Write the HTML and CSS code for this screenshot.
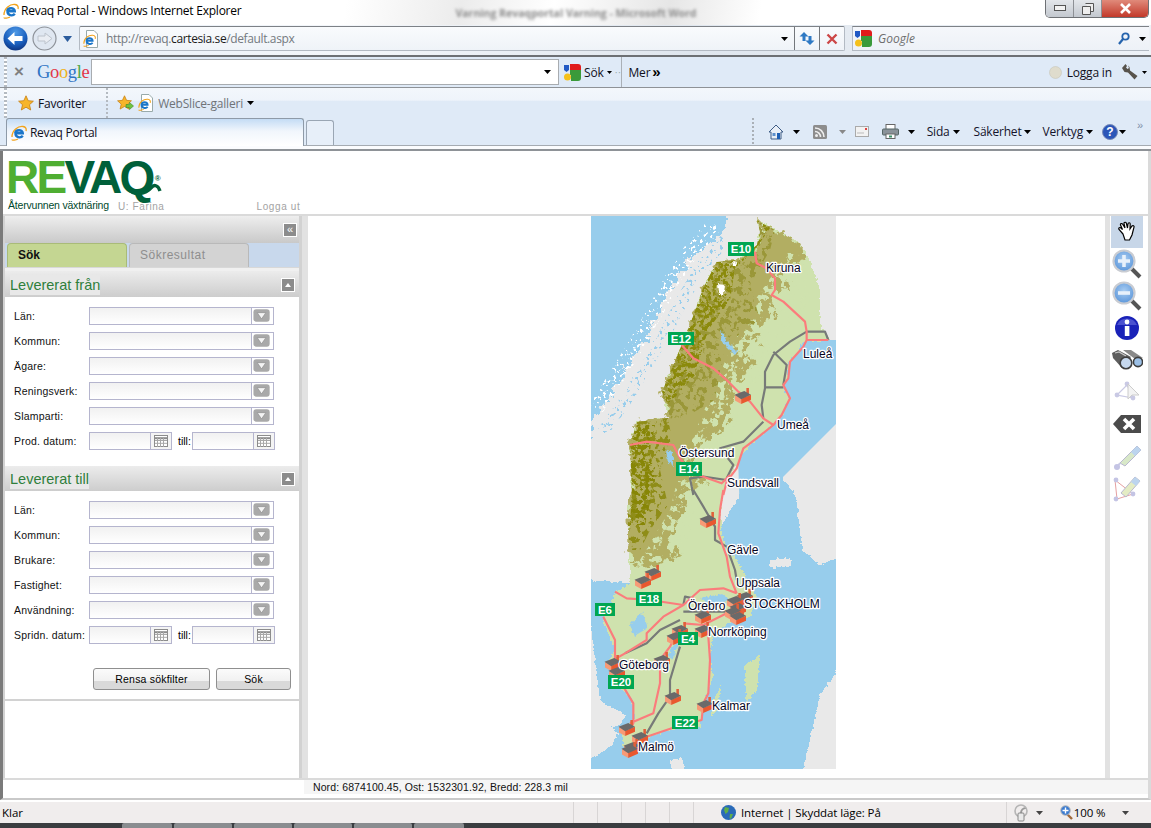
FILE: index.html
```html
<!DOCTYPE html>
<html lang="sv">
<head>
<meta charset="utf-8">
<title>Revaq Portal</title>
<link rel="stylesheet" href="styles.css">
</head>
<body>
<svg class="defs" width="0" height="0">
  <defs>
    <radialGradient id="backfill" cx=".5" cy=".25" r=".8">
      <stop offset="0" stop-color="#4f9ae6"/>
      <stop offset=".6" stop-color="#1a5fbe"/>
      <stop offset="1" stop-color="#0d2f78"/>
    </radialGradient>
    <radialGradient id="lens" cx=".5" cy=".4" r=".6">
      <stop offset="0" stop-color="#a9cdf2"/>
      <stop offset="1" stop-color="#5b96da"/>
    </radialGradient>
    <symbol id="ie" viewBox="0 0 16 16">
      <path d="M4.300 8C4.300 4.500 11.800 4 11.800 8.300H4.500C4.300 12.500 9.800 13.500 11.800 10.800" fill="none" stroke="#1b76c9" stroke-width="2.400"/>
      <path d="M1 12C1 5 7 1 12 1.500 15 1.800 15.500 4 15 6M1 14.500C1 15.800 5 15 7 14" fill="none" stroke="#f2a31b" stroke-width="1.300"/>
    </symbol>
    <symbol id="page-ie" viewBox="0 0 16 18">
      <path d="M3.500 .5H11L14.500 4V17.500H3.500Z" fill="#fff" stroke="#9aa" stroke-width="1"/>
      <use href="#ie" x="0" y="4" width="13" height="13"/>
    </symbol>
    <symbol id="gicon" viewBox="0 0 17 17">
      <path d="M6 0H14Q17 0 17 3V6H6Z" fill="#e01b1b"/>
      <path d="M6 6H17V14Q17 17 14 17H7V11H6Z" fill="#3a9a3a"/>
      <path d="M0 1H5V6L2.500 8 0 6Z" fill="#2159c4"/>
      <circle cx="3.500" cy="13" r="3.500" fill="#f5c01a"/>
    </symbol>
    <symbol id="star" viewBox="0 0 16 16">
      <path d="M8 .8 10.200 5.700 15.400 6.200 11.500 9.700 12.700 15 8 12.200 3.300 15 4.500 9.700.6 6.200 5.800 5.700Z" fill="#f7b52a" stroke="#c77f10" stroke-width=".8"/>
    </symbol>
    <symbol id="dd" viewBox="0 0 22 16">
      <rect x="1.500" y="1" width="17" height="13" rx="3" fill="#a9a9a9"/>
      <path d="M5.500 4.500H14.500L10 11Z" fill="#f4f4f4" stroke="#888" stroke-width=".6"/>
    </symbol>
    <symbol id="cal" viewBox="0 0 14 12">
      <rect x=".5" y=".5" width="13" height="11" fill="#fff" stroke="#8c8c8c"/>
      <path d="M.5 3.200H13.500" stroke="#8c8c8c" stroke-width="2"/>
      <path d="M3.500 3V12M6.500 3V12M9.500 3V12M1 5.500H13M1 8.300H13" stroke="#a8a8a8" stroke-width="1"/>
    </symbol>
    <symbol id="fac" viewBox="-8.500 -8.500 16.500 15.500" overflow="visible">
      <path d="M3 -8.500H5.500V-2H3Z" fill="#e0603a"/>
      <path d="M-8 -2 -2 2V7L-8 3.500Z" fill="#f79a76"/>
      <path d="M-2 2 7.500 -2V3L-2 7Z" fill="#e9582f"/>
      <path d="M-8.500 -2 1 -5.500 7.500 -2 -2 2.500Z" fill="#6a6a6a"/>
    </symbol>
    <filter id="rough" x="-10%" y="-10%" width="120%" height="120%" color-interpolation-filters="sRGB">
      <feTurbulence type="fractalNoise" baseFrequency=".11" numOctaves="4" seed="4"/>
      <feDisplacementMap in="SourceGraphic" scale="16" xChannelSelector="R" yChannelSelector="G"/>
    </filter>
    <filter id="rough2" x="-10%" y="-10%" width="120%" height="120%" color-interpolation-filters="sRGB">
      <feTurbulence type="fractalNoise" baseFrequency=".3" numOctaves="2" seed="9"/>
      <feDisplacementMap in="SourceGraphic" scale="5" xChannelSelector="R" yChannelSelector="G"/>
    </filter>
    <filter id="speck1" x="-5%" y="-5%" width="110%" height="110%" color-interpolation-filters="sRGB">
      <feTurbulence type="fractalNoise" baseFrequency=".16" numOctaves="3" seed="3" result="n"/>
      <feColorMatrix in="n" type="matrix" values="0 0 0 0 0 0 0 0 0 0 0 0 0 0 0 14 0 0 0 -7.300" result="m"/>
      <feComposite in="SourceGraphic" in2="m" operator="in"/>
    </filter>
    <filter id="speck2" x="-5%" y="-5%" width="110%" height="110%" color-interpolation-filters="sRGB">
      <feTurbulence type="fractalNoise" baseFrequency=".22" numOctaves="3" seed="11" result="n"/>
      <feColorMatrix in="n" type="matrix" values="0 0 0 0 0 0 0 0 0 0 0 0 0 0 0 14 0 0 0 -6.800" result="m"/>
      <feComposite in="SourceGraphic" in2="m" operator="in"/>
    </filter>
    <filter id="speck3" x="-5%" y="-5%" width="110%" height="110%" color-interpolation-filters="sRGB">
      <feTurbulence type="fractalNoise" baseFrequency=".3" numOctaves="2" seed="21" result="n"/>
      <feColorMatrix in="n" type="matrix" values="0 0 0 0 0 0 0 0 0 0 0 0 0 0 0 16 0 0 0 -9.600" result="m"/>
      <feComposite in="SourceGraphic" in2="m" operator="in"/>
    </filter>
  </defs>
</svg>

<div class="browser-top">
  <div class="titlebar">
    <svg class="ic16 ml3" viewBox="0 0 16 16"><use href="#ie"/></svg>
    <span class="title-text">Revaq Portal - Windows Internet Explorer</span>
    <span class="ghost-title">Varning Revaqportal Varning - Microsoft Word</span>
    <div class="winbtns">
      <span class="winbtn">
        <svg width="12" height="7" viewBox="0 0 12 7"><rect x=".5" y=".5" width="11" height="5" fill="#f2f2f2" stroke="#555"/></svg>
      </span>
      <span class="winbtn">
        <svg width="12" height="12" viewBox="0 0 12 12"><path d="M3.500 .5H11.500V8.500H9M.5 3.500H8.500V11.500H.5Z" fill="#eee" stroke="#555"/></svg>
      </span>
      <span class="winbtn close">
        <svg width="13" height="11" viewBox="0 0 13 11"><path d="M2 1 11 10M11 1 2 10" stroke="#fff" stroke-width="2.600"/></svg>
      </span>
    </div>
  </div>

  <div class="addressrow">
    <svg class="backbtn" width="25" height="25" viewBox="0 0 25 25">
      <circle cx="12.500" cy="12.500" r="12" fill="url(#backfill)"/>
      <path d="M4.500 12.500 11.500 6V10H19.500V15H11.500V19Z" fill="#fff"/>
    </svg>
    <svg class="fwdbtn" width="25" height="25" viewBox="0 0 25 25">
      <circle cx="12.500" cy="12.500" r="11.500" fill="#dfe7f1" stroke="#8d9299" stroke-width="1.200"/>
      <path d="M20 12.500 13 7V10H6V15H13V18Z" fill="#e9edf3" stroke="#bcc3cc"/>
    </svg>
    <svg class="recent" width="9" height="6" viewBox="0 0 9 6"><path d="M0 0H9L4.500 6Z" fill="#2b5c9d"/></svg>
    <div class="urlbox">
      <svg class="ic-page" viewBox="0 0 16 18"><use href="#page-ie"/></svg>
      <span class="url">http://revaq.<b>cartesia.se</b>/default.aspx</span>
      <svg class="tri ml-auto" width="7" height="4" viewBox="0 0 7 4"><path d="M0 0H7L3.500 4Z"/></svg>
      <span class="urlbtn first">
        <svg width="16" height="15" viewBox="0 0 16 15"><path d="M5 1 .5 5.500H3.500V10H6.500V5.500H9.500ZM11 14 15.500 9.500H12.500V5H9.500V9.500H6.500Z" fill="#2e79c4"/></svg>
      </span>
      <span class="urlbtn">
        <svg width="12" height="12" viewBox="0 0 12 12"><path d="M1.500 1.500 10.500 10.500M10.500 1.500 1.500 10.500" stroke="#cc4747" stroke-width="2.400"/></svg>
      </span>
    </div>
    <div class="searchbox">
      <svg class="ic17" viewBox="0 0 17 17"><use href="#gicon"/></svg>
      <span class="search-text">Google</span>
      <svg class="ml-auto" width="12" height="13" viewBox="0 0 12 13"><circle cx="7.500" cy="4.500" r="3.200" fill="none" stroke="#2563ad" stroke-width="1.800"/><path d="M5 7 1 12" stroke="#2563ad" stroke-width="2.200"/></svg>
      <svg class="tri search-tri" width="7" height="4" viewBox="0 0 7 4"><path d="M0 0H7L3.500 4Z"/></svg>
    </div>
  </div>

  <div class="googlerow">
    <span class="grip"></span>
    <span class="gclose">×</span>
    <span class="glogo"><i class="c-b">G</i><i class="c-r">o</i><i class="c-y">o</i><i class="c-b">g</i><i class="c-g">l</i><i class="c-r">e</i></span>
    <div class="ginput"><svg class="tri ml-auto" width="7" height="4" viewBox="0 0 7 4"><path d="M0 0H7L3.500 4Z"/></svg></div>
    <svg class="ic17 gi" viewBox="0 0 17 17"><use href="#gicon"/></svg>
    <span class="ctext sok">Sök</span>
    <svg class="tri-s" width="5" height="3" viewBox="0 0 5 3"><path d="M0 0H5L2.500 3Z"/></svg>
    <span class="dots">··</span>
    <span class="vline"></span>
    <span class="ctext">Mer</span>
    <span class="more">»</span>
    <svg class="ball" width="13" height="13" viewBox="0 0 13 13"><circle cx="6.500" cy="6.500" r="6" fill="#dfdccd" stroke="#c8c6b8" stroke-width=".6"/></svg>
    <span class="ctext login">Logga in</span>
    <svg class="wrench" width="16" height="16" viewBox="0 0 16 16"><path d="M0 4 3.500 0 5 2 4 3.500 5.500 5 7 4 6 1.500 7.500 3 8 6.500 15.500 12 12.500 15.500 6 8.500 2.500 8Z" fill="#57534c"/></svg>
    <svg class="tri-s end" width="5" height="3" viewBox="0 0 5 3"><path d="M0 0H5L2.500 3Z"/></svg>
  </div>

  <div class="favrow">
    <span class="grip"></span>
    <svg class="ic16 favstar" viewBox="0 0 16 16"><use href="#star"/></svg>
    <span class="ctext">Favoriter</span>
    <span class="grip2"></span>
    <svg class="addfav" width="17" height="17" viewBox="0 0 17 17"><use href="#star" width="15" height="15"/><path d="M9 9.500H12.500V7.500L16.500 11 12.500 14.500V12.500H9Z" fill="#6fc23f" stroke="#3f8a22" stroke-width=".6"/></svg>
    <svg class="ic-page2" viewBox="0 0 16 18"><use href="#page-ie"/></svg>
    <span class="ctext grey">WebSlice-galleri</span>
    <svg class="tri fav-tri" width="7" height="4" viewBox="0 0 7 4"><path d="M0 0H7L3.500 4Z"/></svg>
  </div>

  <div class="tabrow">
    <div class="tab">
      <svg class="ic16" viewBox="0 0 16 16"><use href="#ie"/></svg>
      <span class="ctext tabtext">Revaq Portal</span>
    </div>
    <div class="newtab"></div>
    <div class="cmds">
      <span class="grip3"></span>
      <svg class="cmd-home" width="16" height="16" viewBox="0 0 16 16"><path d="M8 1 15 8H13V15H3V8H1Z" fill="#e8eef6" stroke="#3e5d86"/><rect x="9" y="9" width="3" height="6" fill="#1f5fb3"/><rect x="4.500" y="9" width="3" height="3" fill="#5d8fcb"/></svg>
      <svg class="tri cmd-t1" width="7" height="4" viewBox="0 0 7 4"><path d="M0 0H7L3.500 4Z"/></svg>
      <svg class="cmd-rss" width="14" height="14" viewBox="0 0 14 14"><rect width="14" height="14" rx="1.500" fill="#8d8d8d"/><circle cx="3.500" cy="10.500" r="1.500" fill="#eee"/><path d="M2 6.500A5.500 5.500 0 0 1 7.500 12M2 3A9 9 0 0 1 11 12" fill="none" stroke="#eee" stroke-width="1.600"/></svg>
      <svg class="tri cmd-t2" width="7" height="4" viewBox="0 0 7 4"><path d="M0 0H7L3.500 4Z" fill="#888"/></svg>
      <svg class="cmd-mail" width="14" height="12" viewBox="0 0 14 12"><rect x=".5" y=".5" width="13" height="10" fill="#f2f2f2" stroke="#aaa"/><path d="M2 7H9" stroke="#bbb"/><rect x="10" y="2" width="2" height="2" fill="#d44"/></svg>
      <svg class="cmd-print" width="17" height="15" viewBox="0 0 17 15"><rect x="4" y=".5" width="9" height="6" fill="#fff" stroke="#666"/><rect x=".5" y="5" width="16" height="6" rx="1" fill="#8a9299" stroke="#566"/><rect x="4" y="10" width="9" height="4.500" fill="#fff" stroke="#666"/><rect x="7" y="11.500" width="3" height="2" fill="#3c8f6a"/></svg>
      <svg class="tri cmd-t3" width="7" height="4" viewBox="0 0 7 4"><path d="M0 0H7L3.500 4Z"/></svg>
      <span class="ctext cmd-label">Sida</span>
      <svg class="tri" width="7" height="4" viewBox="0 0 7 4"><path d="M0 0H7L3.500 4Z"/></svg>
      <span class="ctext cmd-label sak">Säkerhet</span>
      <svg class="tri" width="7" height="4" viewBox="0 0 7 4"><path d="M0 0H7L3.500 4Z"/></svg>
      <span class="ctext cmd-label ver">Verktyg</span>
      <svg class="tri" width="7" height="4" viewBox="0 0 7 4"><path d="M0 0H7L3.500 4Z"/></svg>
      <span class="help">?</span>
      <svg class="tri" width="7" height="4" viewBox="0 0 7 4"><path d="M0 0H7L3.500 4Z"/></svg>
      <span class="cmd-more">»</span>
    </div>
  </div>
</div>

<main class="page">
  <header class="apphead">
    <div class="logo">
      <div class="logo-word"><span class="re">RE</span><span class="vaq">VAQ</span><span class="reg">®</span>
        <svg class="qtail" width="44" height="16" viewBox="0 0 44 16"><path d="M6 6C12 15 24 12 29 6 32 2 36 3 38 9" fill="none" stroke="#00603a" stroke-width="3.400"/></svg>
      </div>
      <div class="logo-sub">Återvunnen växtnäring</div>
    </div>
    <span class="user">U: Farina</span>
    <span class="logout">Logga ut</span>
  </header>

  <div class="content">
    <aside class="panel">
      <div class="panelhead"><span class="sqbtn">«</span></div>
      <div class="tabs">
        <span class="ptab active">Sök</span>
        <span class="ptab">Sökresultat</span>
      </div>
      <div class="sechead first"><span class="sectitle">Levererat från</span><span class="sqbtn up"><i></i></span></div>
      <div class="secbody">
        <div class="frow"><label class="flabel">Län:</label><span class="combo"><span class="cfield"></span><svg class="cbtn" viewBox="0 0 22 16"><use href="#dd"/></svg></span></div>
        <div class="frow"><label class="flabel">Kommun:</label><span class="combo"><span class="cfield"></span><svg class="cbtn" viewBox="0 0 22 16"><use href="#dd"/></svg></span></div>
        <div class="frow"><label class="flabel">Ägare:</label><span class="combo"><span class="cfield"></span><svg class="cbtn" viewBox="0 0 22 16"><use href="#dd"/></svg></span></div>
        <div class="frow"><label class="flabel">Reningsverk:</label><span class="combo"><span class="cfield"></span><svg class="cbtn" viewBox="0 0 22 16"><use href="#dd"/></svg></span></div>
        <div class="frow"><label class="flabel">Slamparti:</label><span class="combo"><span class="cfield"></span><svg class="cbtn" viewBox="0 0 22 16"><use href="#dd"/></svg></span></div>
        <div class="frow"><label class="flabel">Prod. datum:</label><span class="date"><span class="cfield"></span><span class="calbtn"><svg width="14" height="12" viewBox="0 0 14 12"><use href="#cal"/></svg></span></span><span class="till">till:</span><span class="date"><span class="cfield"></span><span class="calbtn"><svg width="14" height="12" viewBox="0 0 14 12"><use href="#cal"/></svg></span></span></div>
      </div>
      <div class="sechead"><span class="sectitle">Levererat till</span><span class="sqbtn up"><i></i></span></div>
      <div class="secbody">
        <div class="frow"><label class="flabel">Län:</label><span class="combo"><span class="cfield"></span><svg class="cbtn" viewBox="0 0 22 16"><use href="#dd"/></svg></span></div>
        <div class="frow"><label class="flabel">Kommun:</label><span class="combo"><span class="cfield"></span><svg class="cbtn" viewBox="0 0 22 16"><use href="#dd"/></svg></span></div>
        <div class="frow"><label class="flabel">Brukare:</label><span class="combo"><span class="cfield"></span><svg class="cbtn" viewBox="0 0 22 16"><use href="#dd"/></svg></span></div>
        <div class="frow"><label class="flabel">Fastighet:</label><span class="combo"><span class="cfield"></span><svg class="cbtn" viewBox="0 0 22 16"><use href="#dd"/></svg></span></div>
        <div class="frow"><label class="flabel">Användning:</label><span class="combo"><span class="cfield"></span><svg class="cbtn" viewBox="0 0 22 16"><use href="#dd"/></svg></span></div>
        <div class="frow"><label class="flabel">Spridn. datum:</label><span class="date"><span class="cfield"></span><span class="calbtn"><svg width="14" height="12" viewBox="0 0 14 12"><use href="#cal"/></svg></span></span><span class="till">till:</span><span class="date"><span class="cfield"></span><span class="calbtn"><svg width="14" height="12" viewBox="0 0 14 12"><use href="#cal"/></svg></span></span></div>
      </div>
      <div class="actions">
        <span class="btn wide">Rensa sökfilter</span>
        <span class="btn narrow">Sök</span>
      </div>
      <div class="panelrest"></div>
    </aside>

    <section class="mapwrap">
      <svg class="map" width="245" height="553" viewBox="591 216 245 553">
        <rect x="591" y="216" width="245" height="553" fill="#e9e9e9"/>
        <g filter="url(#rough)" shape-rendering="crispEdges">
          <path fill="#97cdec" d="M585 205H730L723 232 703 248 690 258 673 285 662 308 647 335 633 358 613 392 593 422 585 445Z"/>
        </g>
        <path class="band-white" filter="url(#speck3)" d="M715 225 692 250 672 280 655 312 636 345 616 378 596 408"/>
        <path class="band-blue" filter="url(#speck3)" d="M725 240 703 265 684 297 668 328 648 362 628 397 603 432"/>
        <g filter="url(#rough2)" shape-rendering="crispEdges">
          <path fill="#97cdec" d="M585 580 630 583 700 560 836 340H845L842 408 820 425 802 442 796 458 782 478 796 495 798 513 802 550 820 565 845 555V660L820 695 810 740 802 775H585V735L620 725 625 715 600 700Z"/>
        </g>
        <path fill="#97cdec" d="M800 340H840V420L800 460 740 520 735 360Z"/>
        <g filter="url(#rough2)" shape-rendering="crispEdges">
          <path fill="#e9e9e9" d="M585 735 610 726 618 733 612 745 598 755 585 760Z"/>
          <path fill="#e9e9e9" d="M770 560 790 558 792 566 770 568Z"/>
          <path fill="#e9e9e9" d="M670 760 682 758 686 772 672 772Z"/>
          <path fill="#cfe2ae" d="M757 220 768 225 800 243 810 262 820 288 820 325 830 340 803 342 798 352 788 362 788 378 783 388 790 398 782 415 773 425 750 445 740 458 723 490 720 513 723 540 737 560 747 580 757 597 750 617 730 623 713 633 710 657 713 677 703 707 700 727 670 730 648 737 633 753 623 747 622 730 635 717 632 700 613 680 607 663 615 650 603 620 615 593 630 583 628 503 632 495 630 445 637 422 668 418 662 392 690 325 703 288 717 262 737 260 757 245 760 232Z"/>
          <path fill="#cfe2ae" d="M745 665 760 656 757 690 746 703Z"/>
          <path fill="#cfe2ae" d="M714 700 722 684 718 705 712 716Z"/>
        </g>
        <g filter="url(#rough)">
          <path fill="#b2ae62" d="M757 220 800 243 806 258 787 272 790 292 767 288 777 315 767 325 750 322 763 348 740 332 757 365 733 388 730 422 707 442 690 462 707 482 690 490 670 540 683 557 653 567 630 563 628 503 632 495 630 445 637 422 668 418 662 392 690 325 703 288 717 262 737 260 757 245 760 232Z"/>
        </g>
        <path filter="url(#speck1)" fill="#cfe2ae" d="M790 250 810 262 810 300 775 345 770 365 740 400 735 430 700 470 700 500 680 560 650 580 640 560 670 510 680 470 700 420 730 350 755 300Z"/>
        <path filter="url(#speck1)" fill="#9a9738" d="M757 220 775 230 770 250 750 285 760 320 725 345 715 400 680 420 668 418 662 392 690 325 703 288 717 262 737 260 757 245 760 232Z"/>
        <path filter="url(#speck2)" fill="#8b8a0c" d="M757 220 770 228 755 250 735 268 730 300 708 330 695 375 668 405 662 392 690 325 703 288 717 262 737 260 757 245 760 232Z"/>
        <path filter="url(#speck1)" fill="#8f8d18" d="M637 422 668 418 672 440 660 470 668 505 650 530 640 550 628 550 628 503 632 495 630 445Z"/>
        <path filter="url(#speck2)" fill="#878606" d="M637 425 655 425 650 450 655 480 645 525 630 525 632 495 630 445Z"/>
        <g filter="url(#rough2)">
          <path fill="#fff" d="M718 284 725 285 724 295 719 294Z"/>
          <path fill="#fff" d="M732 261 737 262 736 266 733 266Z"/>
          <path fill="#97cdec" d="M720 328 726 340 738 352 734 354 722 342Z"/>
          <path fill="#97cdec" d="M666 450 672 452 674 466 668 462Z"/>
          <path fill="#97cdec" d="M630 625 642 612 648 628 634 636Z"/>
          <path fill="#97cdec" d="M668 655 678 638 680 640 672 660Z"/>
          <path fill="#97cdec" d="M700 598 722 594 730 600 715 610Z"/>
        </g>
        <g class="roads-grey" transform="translate(590 215) scale(.33333)">
          <path d="M650 350 705 350 715 375M650 350 600 380 550 420 525 470 525 520 515 570 520 610M550 410 590 450 580 510M525 517 580 517M520 620 460 680 390 700 430 750 410 790M410 795 340 785 300 790 310 840"/>
        </g>
        <g class="roads" transform="translate(590 215) scale(.33333)">
          <path d="M495 110 500 145 530 160 555 190 555 225 545 240 580 260 645 320 650 350 650 375 715 375M650 375 640 395 600 440 595 490 580 510 600 550 575 600 550 630 500 670 460 700 440 760 410 800 400 840M275 390 310 430 370 460 410 495 445 530 480 560 520 610 550 630M120 690 170 680 250 690 270 730 300 770 340 785 395 805 420 780"/>
        </g>
        <g class="roads-grey" transform="translate(590 490) scale(.33333)">
          <path d="M310 0 340 50 375 110 375 150 410 170 435 240 440 270M280 345 285 320 310 325M280 365 430 365M105 490 170 460 210 420 270 390M270 470 240 570 240 620 205 670 170 730"/>
        </g>
        <g class="roads" transform="translate(590 490) scale(.33333)">
          <path d="M400 0 390 60 385 130 410 200 420 260 440 310M75 305 110 325 180 330 280 345 330 300 400 295 440 310M280 345 220 380 170 430 170 450 105 490 70 510M40 380 75 450 75 510 100 590 130 640 130 700 120 720M120 700 190 670 210 580 210 510 240 470 260 430M280 400 340 405 410 370M355 440 360 510 355 610 340 640 335 690 245 715 170 740 130 740"/>
        </g>
        <g class="facs">
          <use href="#fac" x="734" y="388" width="18" height="16"/>
          <use href="#fac" x="699" y="512" width="18" height="16"/>
          <use href="#fac" x="644" y="565" width="18" height="16"/>
          <use href="#fac" x="634" y="573" width="18" height="16"/>
          <use href="#fac" x="736" y="589" width="18" height="16"/>
          <use href="#fac" x="726" y="593" width="18" height="16"/>
          <use href="#fac" x="729" y="600" width="18" height="16"/>
          <use href="#fac" x="724" y="604" width="18" height="16"/>
          <use href="#fac" x="729" y="609" width="18" height="16"/>
          <use href="#fac" x="694" y="608" width="18" height="16"/>
          <use href="#fac" x="694" y="622" width="18" height="16"/>
          <use href="#fac" x="671" y="622" width="18" height="16"/>
          <use href="#fac" x="666" y="629" width="18" height="16"/>
          <use href="#fac" x="604" y="655" width="18" height="16"/>
          <use href="#fac" x="608" y="664" width="18" height="16"/>
          <use href="#fac" x="653" y="652" width="18" height="16"/>
          <use href="#fac" x="664" y="689" width="18" height="16"/>
          <use href="#fac" x="696" y="697" width="18" height="16"/>
          <use href="#fac" x="618" y="720" width="18" height="16"/>
          <use href="#fac" x="631" y="729" width="18" height="16"/>
          <use href="#fac" x="623" y="739" width="18" height="16"/>
          <use href="#fac" x="621" y="742" width="18" height="16"/>
        </g>
        <g class="shields">
          <rect x="728" y="242" width="26" height="14"/><text x="741" y="253">E10</text>
          <rect x="668" y="332" width="26" height="13"/><text x="681" y="343">E12</text>
          <rect x="676" y="462" width="26" height="14"/><text x="689" y="473">E14</text>
          <rect x="636" y="592" width="26" height="14"/><text x="649" y="603">E18</text>
          <rect x="595" y="603" width="20" height="13"/><text x="605" y="614">E6</text>
          <rect x="678" y="632" width="20" height="13"/><text x="688" y="643">E4</text>
          <rect x="608" y="675" width="26" height="14"/><text x="621" y="686">E20</text>
          <rect x="672" y="716" width="26" height="13"/><text x="685" y="727">E22</text>
        </g>
        <g class="cities">
          <text x="766" y="272">Kiruna</text>
          <text x="803" y="358">Luleå</text>
          <text x="777" y="429">Umeå</text>
          <text x="679" y="457">Östersund</text>
          <text x="727" y="487">Sundsvall</text>
          <text x="727" y="554">Gävle</text>
          <text x="736" y="587">Uppsala</text>
          <text x="744" y="608">STOCKHOLM</text>
          <text x="688" y="610">Örebro</text>
          <text x="708" y="636">Norrköping</text>
          <text x="619" y="669">Göteborg</text>
          <text x="712" y="710">Kalmar</text>
          <text x="638" y="751">Malmö</text>
        </g>
      </svg>
    </section>

    <nav class="tools">
      <span class="tool sel">
        <svg width="20" height="22" viewBox="0 0 20 22"><path d="M6 13 2 8.500C1 7 3 6 4 7L5.500 8.500 3.500 4C3 2.500 5 2 5.700 3.300L8 7 7 2.500C6.800 1 9 .8 9.400 2.300L10.500 7 11 2.800C11.300 1.300 13.200 1.500 13.200 3L13 8 15 5C16 4 17.500 5 17 6.200L15 14 12.500 19H8Z" fill="#fff" stroke="#000" stroke-width="1.200"/></svg>
      </span>
      <span class="tool">
        <svg width="30" height="30" viewBox="0 0 30 30"><path d="M19 19 28 28" stroke="#555" stroke-width="4"/><circle cx="12" cy="12" r="10.500" fill="url(#lens)" stroke="#c9ccd2" stroke-width="2.200"/><path d="M12 6V18M6 12H18" stroke="#e8f1fb" stroke-width="3.600"/></svg>
      </span>
      <span class="tool">
        <svg width="30" height="30" viewBox="0 0 30 30"><path d="M19 19 28 28" stroke="#555" stroke-width="4"/><circle cx="12" cy="12" r="10.500" fill="url(#lens)" stroke="#c9ccd2" stroke-width="2.200"/><path d="M6 12H18" stroke="#e8f1fb" stroke-width="3.600"/></svg>
      </span>
      <span class="tool">
        <svg width="26" height="26" viewBox="0 0 26 26"><circle cx="13" cy="13" r="12" fill="#1a22b8"/><path d="M3 10A11 11 0 0 1 23 10Z" fill="#6a72e0" opacity=".6"/><circle cx="13" cy="7" r="2.400" fill="#fff"/><rect x="10.800" y="11" width="4.600" height="10" fill="#fff"/></svg>
      </span>
      <span class="tool">
        <svg width="32" height="22" viewBox="0 0 32 22"><path d="M12 1H20L32 9 24 10Z" fill="#8a8a8a"/><path d="M1 4 7 1 20 8 11 19 2 9Z" fill="#5e5e5e"/><path d="M4 4 8 3 15 7" fill="none" stroke="#c8c8c8" stroke-width="1.200"/><circle cx="15" cy="14" r="5.800" fill="#c6d8ee" stroke="#3e3e3e" stroke-width="1.600"/><circle cx="27" cy="13" r="4.600" fill="#9cc0e6" stroke="#3e3e3e" stroke-width="1.600"/></svg>
      </span>
      <span class="tool">
        <svg width="28" height="28" viewBox="0 0 28 28"><path d="M4 17 14 7 20 20Z" fill="none" stroke="#c9c9e4" stroke-width="1.200"/><circle cx="14" cy="6" r="2.400" fill="#c9c9e4"/><circle cx="4" cy="17" r="2.400" fill="#c9c9e4"/><circle cx="20" cy="20" r="2.400" fill="#c9c9e4"/><path d="M15 6V21L19 17 26 17Z" fill="#f3f3f3" stroke="#ccc"/></svg>
      </span>
      <span class="tool">
        <svg width="30" height="20" viewBox="0 0 30 20"><path d="M9 1H29V19H9L1 10Z" fill="#4b4b4b"/><path d="M12 5 22 15M22 5 12 15" stroke="#fff" stroke-width="3.600"/></svg>
      </span>
      <span class="tool">
        <svg width="28" height="30" viewBox="0 0 28 30"><path d="M7 22 24 5 28 9 12 25Z" fill="#d8e8c8" stroke="#b9b9cf"/><path d="M18 11 24 5 28 9 22 15Z" fill="#bcd4ee"/><path d="M7 22 5 25" stroke="#c9c9e4" stroke-width="2"/><circle cx="4" cy="26" r="3" fill="#c4c4e4"/></svg>
      </span>
      <span class="tool">
        <svg width="28" height="30" viewBox="0 0 28 30"><path d="M4 26 2 7 20 21Z" fill="none" stroke="#e6a0a0" stroke-width="1"/><circle cx="3" cy="7" r="2.400" fill="#c4c4e4"/><circle cx="3" cy="26" r="2.400" fill="#c4c4e4"/><circle cx="20" cy="21" r="2.400" fill="#c4c4e4"/><path d="M8 20 22 4 27 8 13 24Z" fill="#e4ecc4" stroke="#b9b9cf"/><path d="M18 9 22 4 27 8 23 13Z" fill="#bcd4ee"/></svg>
      </span>
    </nav>
  </div>

  <div class="coords"><span class="coordtext">Nord: 6874100.45, Ost: 1532301.92, Bredd: 228.3 mil</span></div>
</main>

<footer class="status">
  <span class="klar">Klar</span>
  <span class="cell"></span><span class="cell"></span><span class="cell"></span><span class="cell"></span><span class="cell"></span><span class="cell"></span>
  <svg class="globe" width="15" height="15" viewBox="0 0 15 15"><circle cx="7.500" cy="7.500" r="7.500" fill="#2a6ab8"/><path d="M4 2 8 3 7 7 4.500 9 3 5ZM9 9 12 9 10 14 8.500 13Z" fill="#5fae4a"/></svg>
  <span class="stext zone">Internet | Skyddat läge: På</span>
  <span class="statgap"></span>
  <svg class="lock" width="16" height="18" viewBox="0 0 16 18"><path d="M8 17V9A5 5 0 0 1 13 4" fill="none" stroke="#9a9a9a" stroke-width="2"/><circle cx="8" cy="7" r="6" fill="none" stroke="#b5b5b5" stroke-width="1.600"/><rect x="5" y="9" width="6" height="8" rx="1" fill="#e9e9e9" stroke="#888"/></svg>
  <svg class="tri st-t" width="7" height="4" viewBox="0 0 7 4"><path d="M0 0H7L3.500 4Z" fill="#444"/></svg>
  <svg class="zoomi" width="13" height="15" viewBox="0 0 13 15"><path d="M7 9 12 14" stroke="#a06a3a" stroke-width="2.400"/><circle cx="5.500" cy="5.500" r="4.800" fill="#3b7bd0" stroke="#bbb"/><path d="M5.500 2.500V8.500M2.500 5.500H8.500" stroke="#fff" stroke-width="1.400"/></svg>
  <span class="stext pct">100 %</span>
  <svg class="tri st-z" width="7" height="4" viewBox="0 0 7 4"><path d="M0 0H7L3.500 4Z" fill="#444"/></svg>
</footer>
<div class="taskbar">
  <span class="tb s1"></span><span class="tb s2"></span><span class="tb s3"></span><span class="tb s4"></span><span class="tb s5"></span><span class="tb s6"></span>
</div>
</body>
</html>
```
FILE: styles.css
```css
* { box-sizing: border-box; }
html, body { margin: 0; padding: 0; }
body {
  width: 1151px;
  height: 828px;
  overflow: hidden;
  background: #fff;
  font-family: "Liberation Sans", Arial, sans-serif;
  color: #000;
}
.defs { display: block; height: 0; }
svg { display: block; flex: none; }
.ml-auto { margin-left: auto; }
.ml3 { margin-left: 3px; }

/* ---------- browser chrome ---------- */
.browser-top {
  height: 151px;
  padding-bottom: 3px;
  background: #fbfcfe;
  border-bottom: 2px solid #8e9297;
  display: flex;
  flex-direction: column;
}
.titlebar {
  height: 25px;
  flex: none;
  display: flex;
  align-items: flex-start;
  background: linear-gradient(100deg, #fff 0, #fff 30%, #ececec 40%, #fff 48%, #e6e6e6 58%, #fff 66%, #fff 100%);
}
.titlebar .ic16 { margin-top: 3px; }
.ic16 { width: 16px; height: 16px; }
.ic17 { width: 17px; height: 17px; }
.title-text {
  margin: 3px 0 0 2px;
  font: 12px/16px "Open Sans", sans-serif;
  letter-spacing: -.24px;
  white-space: nowrap;
}
.ghost-title {
  margin: 6px 0 0 214px;
  font: bold 10.500px/14px "Open Sans", sans-serif;
  color: #8d8d8d;
  filter: blur(1.4px);
  white-space: nowrap;
}
.winbtns {
  margin-left: auto;
  margin-right: 2px;
  display: flex;
  height: 18px;
  border: 1px solid #6e7175;
  border-top: 0;
  border-radius: 0 0 5px 5px;
  overflow: hidden;
}
.winbtn {
  width: 28px;
  display: flex;
  align-items: center;
  justify-content: center;
  background: linear-gradient(#e3e6ea, #c3c8cf);
  border-right: 1px solid #8d9095;
}
.winbtn.close {
  width: 46px;
  border: 0;
  background: linear-gradient(#e08a7a, #c2392a);
}
.addressrow {
  height: 32px;
  flex: none;
  display: flex;
  align-items: flex-start;
  padding-top: 1px;
  background: linear-gradient(90deg, #e5edf6, #f3f6fa 30%, #dfe6ee 60%, #eef2f7);
  border-bottom: 2px solid #6d7074;
}
.backbtn { margin-left: 3px; }
.fwdbtn { margin-left: 4px; }
.recent { margin: 10px 0 0 6px; }
.urlbox {
  width: 766px;
  height: 25px;
  margin-left: 7px;
  display: flex;
  align-items: center;
  background: linear-gradient(#f9fbfd, #eff3f8);
  border: 1px solid #b3bac3;
  border-top-color: #7d8186;
  border-radius: 2px;
}
.ic-page { width: 16px; height: 18px; margin-left: 3px; }
.ic-page2 { width: 16px; height: 18px; margin-left: 4px; }
.url {
  margin-left: 7px;
  font: 12px "Open Sans", sans-serif;
  letter-spacing: -.38px;
  color: #747a80;
}
.url b { font-weight: 400; color: #1a1a1a; }
.tri { fill: #000; }
.urlbox .tri { margin-right: 6px; }
.urlbtn {
  width: 25px;
  height: 23px;
  display: flex;
  align-items: center;
  justify-content: center;
  border-left: 1px solid #73777c;
}
.searchbox {
  width: 297px;
  height: 25px;
  margin-left: 7px;
  display: flex;
  align-items: center;
  padding-left: 2px;
  background: linear-gradient(#f5f7fb, #edf1f7);
  border: 1px solid #b3bac3;
  border-top-color: #7d8186;
  border-right: 0;
}
.search-text {
  margin-left: 6px;
  font: italic 12px "Open Sans", sans-serif;
  color: #6e6e6e;
}
.search-tri { margin: 0 3px 0 9px; }
.googlerow {
  height: 31px;
  flex: none;
  display: flex;
  align-items: center;
  border-bottom: 1px solid #8e9297;
  background: #dfeaf7;
}
.grip {
  width: 3px;
  height: 100%;
  margin-left: 4px;
  background: repeating-linear-gradient(#b4bac1 0 2px, #fff 2px 4px);
  flex: none;
}
.gclose {
  width: 20px;
  margin-left: 2px;
  font: bold 17px "Liberation Sans", sans-serif;
  color: #808080;
  text-align: center;
}
.glogo {
  margin-left: 8px;
  width: 54px;
  font: 18.500px "Liberation Serif", serif;
  letter-spacing: -.35px;
}
.glogo i { font-style: normal; }
.c-b { color: #2f74c4; }
.c-r { color: #e2374a; }
.c-y { color: #efb21c; }
.c-g { color: #4aa84a; }
.ginput {
  width: 468px;
  height: 26px;
  display: flex;
  align-items: center;
  padding-right: 7px;
  background: #fff;
  border: 1px solid #a8acb0;
}
.gi { margin-left: 5px; }
.ctext {
  font: 12px "Open Sans", sans-serif;
  letter-spacing: -.2px;
  white-space: nowrap;
  color: #10101c;
}
.sok { margin-left: 3px; }
.tri-s { margin-left: 3px; }
.dots { margin-left: 3px; width: 6px; color: #9aa; font-size: 10px; overflow: hidden; }
.vline { width: 1px; height: 100%; background: #aab0b7; margin: 0 7px 0 0; }
.more { margin-left: 2px; font: bold 15px/14px "Liberation Sans", sans-serif; }
.ball { margin-left: 388px; }
.login { margin-left: 5px; }
.wrench { margin-left: 10px; }
.tri-s.end { margin-left: 4px; }
.favrow {
  height: 30px;
  flex: none;
  display: flex;
  align-items: center;
  background: linear-gradient(#f3f7fc 0, #eff4fb 40%, #dfeaf7 45%, #dfeaf7 100%);
}
.favstar { margin: 0 4px 0 11px; }
.grip2 {
  width: 2px;
  height: 100%;
  margin-left: 20px;
  background: repeating-linear-gradient(#b4bac1 0 2px, transparent 2px 4px);
}
.addfav { margin-left: 9px; }
.grey { color: #707478; margin-left: 4px; }
.fav-tri { margin-left: 4px; }
.tabrow {
  flex: 1;
  min-height: 0;
  display: flex;
  align-items: flex-end;
  padding-left: 6px;
  background: #dfeaf7;
  border-bottom: 1px solid #a5abb2;
}
.tab {
  width: 298px;
  height: 28px;
  margin-bottom: -1px;
  display: flex;
  align-items: center;
  padding: 0 0 0 4px;
  background: linear-gradient(#c4dcf5, #f1f6fc 45%, #fff);
  border: 1px solid #8e9aa8;
  border-bottom: 0;
  border-radius: 3px 3px 0 0;
}
.tabtext { margin-left: 3px; letter-spacing: -.3px; }
.newtab {
  width: 28px;
  height: 25px;
  margin-left: 2px;
  background: #e7eff9;
  border: 1px solid #9aa6b4;
  border-bottom: 0;
  border-radius: 3px 3px 0 0;
}
.cmds {
  margin-left: auto;
  height: 27px;
  display: flex;
  align-items: center;
}
.grip3 {
  width: 2px;
  height: 100%;
  background: repeating-linear-gradient(#aab0b7 0 2px, transparent 2px 4px);
}
.cmd-home { margin-left: 14px; }
.cmd-t1 { margin-left: 9px; }
.cmd-rss { margin-left: 13px; }
.cmd-t2 { margin-left: 12px; }
.cmd-mail { margin-left: 9px; }
.cmd-print { margin-left: 13px; }
.cmd-t3 { margin-left: 9px; }
.cmd-label { margin: 0 3px 0 12px; color: #14142b; }
.cmd-label.sak { margin-left: 14px; }
.cmd-label.ver { margin-left: 11px; }
.help {
  width: 16px;
  height: 16px;
  margin: 0 1px 0 9px;
  border-radius: 50%;
  background: #2c56b8;
  border: 1px solid #7a8cb8;
  color: #fff;
  font: bold 12px/14px "Liberation Sans", sans-serif;
  text-align: center;
}
.cmd-more { margin: -14px 0 0 11px; width: 14px; font: 11px "Liberation Sans", sans-serif; color: #7e8ea8; }

/* ---------- page ---------- */
.page {
  height: 649px;
  display: flex;
  flex-direction: column;
  border-left: 3px solid #7a7a7a;
  border-right: 3px solid #dadada;
  border-bottom: 2px solid #c9c9c9;
  background: #fff;
}
.apphead {
  height: 63px;
  flex: none;
  display: flex;
  align-items: flex-end;
  padding: 0 0 3px 5px;
}
.logo { width: 110px; flex: none; }
.logo-word {
  position: relative;
  display: flex;
  align-items: flex-start;
  height: 41px;
  margin-left: -2px;
  font: bold 46px/38px "Liberation Sans", sans-serif;
  letter-spacing: -2.700px;
  white-space: nowrap;
}
.re { color: #4fae32; }
.vaq { color: #00603a; }
.reg { font-size: 8px; line-height: 20px; letter-spacing: 0; color: #00603a; margin: 11px 0 0 2px; }
.qtail { position: absolute; left: 116px; top: 24px; }
.logo-sub {
  font: 10.500px/12px "Liberation Sans", sans-serif;
  letter-spacing: -.2px;
  color: #00482c;
  white-space: nowrap;
}
.user, .logout {
  margin-bottom: -2px;
  font: 10px/12px "Liberation Sans", sans-serif;
  letter-spacing: .6px;
  color: #a3a3a3;
  white-space: nowrap;
}
.logout { margin-left: 92px; }
.content {
  flex: 1;
  min-height: 0;
  display: flex;
  border-top: 2px solid #dadada;
  border-bottom: 2px solid #dadada;
}
.panel {
  width: 299px;
  flex: none;
  display: flex;
  flex-direction: column;
  background: #fff;
  border-left: 2px solid #d2d2d2;
  border-right: 3px solid #d2d2d2;
}
.panelhead {
  height: 27px;
  flex: none;
  display: flex;
  justify-content: flex-end;
  align-items: center;
  padding-right: 2px;
  background: linear-gradient(#eeeeee, #c9c9c9);
}
.sqbtn {
  width: 14px;
  height: 14px;
  background: #8c8c8c;
  border: 1px solid #fff;
  color: #fff;
  font: 11px/11px "Liberation Sans", sans-serif;
  text-align: center;
  display: flex;
  align-items: center;
  justify-content: center;
}
.sqbtn.up { margin-right: 4px; }
.sqbtn i {
  width: 0;
  height: 0;
  border-left: 3px solid transparent;
  border-right: 3px solid transparent;
  border-bottom: 4px solid #fff;
}
.tabs {
  height: 25px;
  flex: none;
  display: flex;
  align-items: flex-end;
  gap: 2px;
  padding-left: 2px;
  background: #c8d8ec;
  border-bottom: 1px solid #d8d8d8;
}
.ptab {
  width: 120px;
  height: 24px;
  padding-left: 10px;
  background: #d3d3d3;
  border: 1px solid #b9b9b9;
  border-bottom: 0;
  border-radius: 4px 4px 0 0;
  font: 12px/22px "Liberation Sans", sans-serif;
  letter-spacing: .5px;
  color: #8e8e8e;
}
.ptab.active {
  background: #c4d692;
  border-color: #a9bb78;
  font-weight: 700;
  letter-spacing: 0;
  color: #111;
}
.sechead {
  height: 25px;
  flex: none;
  display: flex;
  align-items: center;
  justify-content: space-between;
  padding-left: 5px;
  background: linear-gradient(#ececec, #cdcdcd);
}
.sechead.first { height: 29px; padding-top: 1px; border-top: 3px solid #f0f0f0; }
.sectitle {
  font: 14.500px/20px "Liberation Sans", sans-serif;
  color: #2f7f3c;
  background: #e8e8e8;
}
.secbody {
  padding: 6px 0 13px 9px;
  flex: none;
}
.frow {
  height: 25px;
  display: flex;
  align-items: center;
}
.flabel {
  width: 75px;
  flex: none;
  font: 10.500px/14px "Liberation Sans", sans-serif;
  letter-spacing: .2px;
  white-space: nowrap;
  color: #111;
}
.combo {
  width: 185px;
  height: 18px;
  display: flex;
  border: 1px solid #b5b5ce;
}
.cfield {
  flex: 1;
  min-width: 0;
  background: linear-gradient(#f1f1f1, #fff);
}
.cbtn {
  width: 22px;
  height: 16px;
  border-left: 1px solid #b5b5ce;
}
.date {
  width: 83px;
  height: 18px;
  display: flex;
  border: 1px solid #b5b5ce;
}
.calbtn {
  width: 21px;
  flex: none;
  display: flex;
  align-items: center;
  justify-content: center;
  background: #f4f4f4;
  border-left: 1px solid #b5b5ce;
}
.till {
  width: 20px;
  flex: none;
  padding-left: 6px;
  font: 10.500px "Liberation Sans", sans-serif;
}
.actions {
  flex: none;
  display: flex;
  gap: 6px;
  padding: 8px 0 9px 88px;
  border-bottom: 2px solid #d2d2d2;
}
.btn {
  height: 22px;
  border: 1px solid #8f8f8f;
  border-radius: 3px;
  background: linear-gradient(#fbfbfb 0, #f1f1f1 60%, #d9d9d9 60%, #d9d9d9 100%);
  font: 10.500px/20px "Liberation Sans", sans-serif;
  letter-spacing: .2px;
  text-align: center;
}
.wide { width: 117px; }
.narrow { width: 75px; }
.panelrest { flex: 1; }
.mapwrap {
  flex: 1;
  min-width: 0;
  padding-left: 283px;
  border-left: 6px solid #e2e2e2;
  border-right: 5px solid #e2e2e2;
  background: #fff;
}
.band-white { fill: none; stroke: #fff; stroke-width: 16; }
.band-blue { fill: none; stroke: #97cdec; stroke-width: 12; }
.roads path, .roads-grey path { fill: none; stroke-linejoin: round; }
.roads path { stroke: #fb7c7c; stroke-width: 6.500; }
.roads-grey path { stroke: #777a78; stroke-width: 6.500; }
.shields rect { fill: #00a651; }
.shields text {
  fill: #fff;
  font: bold 11.500px "Liberation Sans", sans-serif;
  text-anchor: middle;
}
.cities text {
  font: 12px "Liberation Sans", sans-serif;
  fill: #05051f;
  stroke: #fff;
  stroke-width: 2.500px;
  paint-order: stroke;
  stroke-linejoin: round;
}
.tools {
  width: 38px;
  flex: none;
  display: flex;
  flex-direction: column;
}
.tool {
  width: 32px;
  height: 32px;
  margin-left: 1px;
  display: flex;
  align-items: center;
  justify-content: center;
}
.tool.sel { background: #c7d6e8; }
.coords {
  height: 18px;
  flex: none;
  padding-left: 301px;
}
.coordtext {
  display: block;
  height: 14px;
  padding-left: 9px;
  background: #f5f5f5;
  font: 10.500px/14px "Liberation Sans", sans-serif;
  letter-spacing: .1px;
  color: #111;
}

/* ---------- status bar ---------- */
.status {
  height: 22px;
  margin-top: 1px;
  display: flex;
  align-items: center;
  background: #f0eded;
  border-top: 1px solid #fff;
}
.klar { width: 573px; padding-left: 2px; font: 11.500px "Open Sans", sans-serif; }
.cell { width: 24px; height: 100%; border-left: 1px solid #d8d5d5; }
.globe { margin-left: 4px; }
.stext { font: 11.500px "Open Sans", sans-serif; letter-spacing: -.1px; }
.zone { margin-left: 5px; }
.statgap { width: 124px; height: 100%; border-right: 1px solid #d8d5d5; margin-right: 6px; margin-left: 2px; flex: none; }
.st-t { margin-left: 7px; }
.zoomi { margin-left: 17px; }
.pct { margin-left: 1px; }
.st-z { margin-left: 17px; }
.taskbar {
  height: 5px;
  display: flex;
  padding-left: 122px;
  background: #3a3d40;
}
.tb { height: 5px; margin-right: 2px; background: #8a8d90; border-radius: 2px 2px 0 0; }
.s1 { width: 50px; }
.s2, .s3 { width: 58px; }
.s4 { width: 58px; }
.s5 { width: 58px; }
.s6 { width: 50px; }
```
